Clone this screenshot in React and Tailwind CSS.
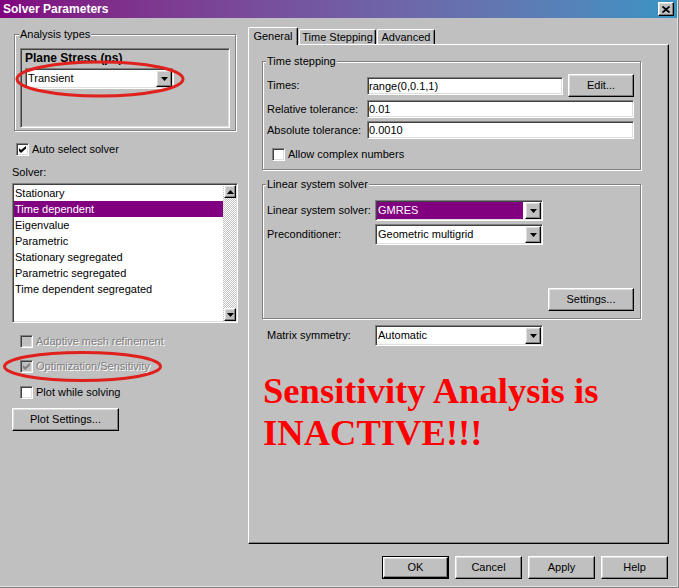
import React from "react";

const raised =
  "border border-t-white border-l-white border-r-black border-b-black shadow-[inset_-1px_-1px_0_#808080,inset_1px_1px_0_#dfdfdf]";
const sunken =
  "border border-t-[#808080] border-l-[#808080] border-r-white border-b-white shadow-[inset_1px_1px_0_#404040,inset_-1px_-1px_0_#dfdfdf] p-[1px]";
const etched =
  "relative border border-[#808080] shadow-[inset_1px_1px_0_#fff,1px_1px_0_#fff]";
const disabledText = "text-[#808080] [text-shadow:1px_1px_0_#fff]";

function Check({ color = "#000" }) {
  return (
    <svg width="7" height="7" viewBox="0 0 7 7">
      <polygon points="0,2 2,4 7,0 7,2.6 2,7 0,5" fill={color} />
    </svg>
  );
}

function Checkbox({ checked, disabled }) {
  return (
    <div
      className={
        "w-[13px] h-[13px] flex items-center justify-center " +
        sunken +
        (disabled ? " bg-[#c0c0c0]" : " bg-white")
      }
    >
      {checked && <Check color={disabled ? "#808080" : "#000"} />}
    </div>
  );
}

function Arrow({ up }) {
  return (
    <svg width="7" height="4" viewBox="0 0 7 4">
      {up ? (
        <polygon points="0,4 7,4 3.5,0" fill="#000" />
      ) : (
        <polygon points="0,0 7,0 3.5,4" fill="#000" />
      )}
    </svg>
  );
}

function Combo({ value, width, highlight }) {
  return (
    <div className={"h-[21px] flex bg-white " + sunken + " " + width}>
      <div className="flex-1 flex items-center pr-[2px]">
        <span
          className={
            "flex-1 h-full pl-[1px] leading-[17px] " +
            (highlight ? "bg-[#800080] text-white" : "")
          }
        >
          {value}
        </span>
      </div>
      <div className={"w-[16px] h-full flex items-center justify-center bg-[#c0c0c0] " + raised}>
        <Arrow />
      </div>
    </div>
  );
}

function Button({ label, width, isDefault }) {
  if (isDefault) {
    return (
      <div className={"h-[23px] border border-black " + width}>
        <div className={"h-full flex items-center justify-center " + raised}>{label}</div>
      </div>
    );
  }
  return (
    <div className={"h-[23px] flex items-center justify-center " + raised + " " + width}>
      {label}
    </div>
  );
}

function Field({ value, width }) {
  return (
    <div className={"h-[18px] bg-white leading-[14px] " + sunken + " " + width}>{value}</div>
  );
}

const solvers = [
  "Stationary",
  "Time dependent",
  "Eigenvalue",
  "Parametric",
  "Stationary segregated",
  "Parametric segregated",
  "Time dependent segregated",
];

export default function App() {
  return (
    <div className="relative w-[679px] h-[588px] bg-[#c0c0c0] border-r border-b border-[#808080] shadow-[inset_-1px_-1px_0_#dfdfdf] font-['Liberation_Sans',Arial,sans-serif] text-[11px] leading-[13px] text-black overflow-hidden">
      {/* title bar */}
      <div className="h-[18px] w-[677px] flex items-center justify-between bg-gradient-to-r from-[#800080] to-[#3794c4] pl-[3px] pr-[3px]">
        <span className="text-white font-bold text-[12px] leading-[14px]">Solver Parameters</span>
        <div className={"w-[16px] h-[14px] flex items-center justify-center bg-[#c0c0c0] " + raised}>
          <svg width="8" height="7" viewBox="0 0 8 7">
            <path d="M0.5 0.5 L7.5 6.5 M7.5 0.5 L0.5 6.5" stroke="#000" strokeWidth="1.8" />
          </svg>
        </div>
      </div>

      <div className="flex">
        {/* left column */}
        <div className="w-[248px] pl-[12px] pt-[16px]">
          <div className={etched + " ml-[2px] w-[222px] h-[97px]"}>
            <span className="absolute -top-[7px] left-[4px] px-[1px] bg-[#c0c0c0]">Analysis types</span>
            <div className={"mt-[13px] ml-[5px] w-[210px] h-[80px] bg-[#c0c0c0] " + sunken}>
              <div className="pl-[3px] pt-[1px]">
                <div className="font-bold text-[12px] leading-[14px]">Plane Stress (ps)</div>
                <div className="mt-[3px]">
                  <Combo value="Transient" width="w-[149px]" />
                </div>
              </div>
            </div>
          </div>

          <div className="mt-[12px] ml-[4px] flex items-center gap-[3px]">
            <Checkbox checked />
            <span>Auto select solver</span>
          </div>

          <div className="mt-[10px]">Solver:</div>

          <div className={"mt-[4px] w-[226px] h-[140px] bg-white flex " + sunken}>
            <div className="flex-1">
              {solvers.map((s) => (
                <div
                  key={s}
                  className={
                    "h-[16px] leading-[16px] pl-[1px] " +
                    (s === "Time dependent" ? "bg-[#800080] text-white" : "")
                  }
                >
                  {s}
                </div>
              ))}
            </div>
            <div className="w-[13px] h-full flex flex-col justify-between bg-[image:repeating-conic-gradient(#c0c0c0_0%_25%,#fff_0%_50%)] bg-[length:2px_2px]">
              <div className={"w-[12px] h-[13px] ml-[1px] flex items-center justify-center bg-[#c0c0c0] " + raised}>
                <Arrow up />
              </div>
              <div className={"w-[12px] h-[13px] ml-[1px] flex items-center justify-center bg-[#c0c0c0] " + raised}>
                <Arrow />
              </div>
            </div>
          </div>

          <div className="mt-[12px] ml-[8px] flex items-center gap-[3px]">
            <Checkbox disabled />
            <span className={disabledText}>Adaptive mesh refinement</span>
          </div>
          <div className="mt-[12px] ml-[8px] flex items-center gap-[3px]">
            <Checkbox checked disabled />
            <span className={disabledText}>Optimization/Sensitivity</span>
          </div>
          <div className="mt-[13px] ml-[8px] flex items-center gap-[3px]">
            <Checkbox />
            <span>Plot while solving</span>
          </div>

          <div className="mt-[9px]">
            <Button label="Plot Settings..." width="w-[107px]" />
          </div>
        </div>

        {/* right column */}
        <div className="w-[421px]">
          <div className="mt-[9px] h-[17px] flex items-end">
            <div className="relative z-10 -mb-px w-[50px] h-[18px] flex items-center justify-center pb-[1px] bg-[#c0c0c0] border-t border-l border-r border-t-white border-l-white border-r-black rounded-t-[2px] shadow-[inset_-1px_0_0_#808080]">
              General
            </div>
            <div className="ml-[1px] w-[77px] h-[15px] flex items-center justify-center bg-[#c0c0c0] border-t border-l border-r border-t-white border-l-white border-r-black rounded-t-[2px] shadow-[inset_-1px_0_0_#808080]">
              Time Stepping
            </div>
            <div className="ml-[1px] w-[58px] h-[15px] flex items-center justify-center bg-[#c0c0c0] border-t border-l border-r border-t-white border-l-white border-r-black rounded-t-[2px] shadow-[inset_-1px_0_0_#808080]">
              Advanced
            </div>
          </div>

          <div className="w-[421px] h-[500px] pl-[13px] pt-[16px] border border-t-white border-l-white border-r-black border-b-black shadow-[inset_-1px_-1px_0_#808080]">
            <div className={etched + " w-[379px] h-[109px] pt-[12px] pl-[4px]"}>
              <span className="absolute -top-[7px] left-[3px] px-[1px] bg-[#c0c0c0]">Time stepping</span>
              <div className="h-[23px] flex items-center">
                <span className="w-[100px]">Times:</span>
                <Field value="range(0,0.1,1)" width="w-[196px]" />
                <div className="ml-[5px]">
                  <Button label="Edit..." width="w-[66px]" />
                </div>
              </div>
              <div className="mt-[3px] flex items-center">
                <span className="w-[100px]">Relative tolerance:</span>
                <Field value="0.01" width="w-[267px]" />
              </div>
              <div className="mt-[3px] flex items-center">
                <span className="w-[100px]">Absolute tolerance:</span>
                <Field value="0.0010" width="w-[267px]" />
              </div>
              <div className="mt-[9px] ml-[5px] flex items-center gap-[3px]">
                <Checkbox />
                <span>Allow complex numbers</span>
              </div>
            </div>

            <div className={etched + " mt-[14px] w-[379px] h-[135px] pt-[15px] pl-[4px]"}>
              <span className="absolute -top-[7px] left-[3px] px-[1px] bg-[#c0c0c0]">Linear system solver</span>
              <div className="flex items-center">
                <span className="w-[108px]">Linear system solver:</span>
                <Combo value="GMRES" width="w-[168px]" highlight />
              </div>
              <div className="mt-[3px] flex items-center">
                <span className="w-[108px]">Preconditioner:</span>
                <Combo value="Geometric multigrid" width="w-[168px]" />
              </div>
              <div className="mt-[43px] flex justify-end pr-[6px]">
                <Button label="Settings..." width="w-[86px]" />
              </div>
            </div>

            <div className="mt-[6px] ml-[5px] flex items-center">
              <span className="w-[108px]">Matrix symmetry:</span>
              <Combo value="Automatic" width="w-[168px]" />
            </div>

            <div className="mt-[24px] ml-[1px] font-['Liberation_Serif','Times_New_Roman',serif] font-bold text-[36.6px] leading-[42px] text-[#ff0000]">
              Sensitivity Analysis is
              <br />
              INACTIVE!!!
            </div>
          </div>
        </div>
      </div>

      {/* dialog buttons */}
      <div className="mt-[12px] pr-[10px] flex justify-end gap-[6px]">
        <Button label="OK" width="w-[67px]" isDefault />
        <Button label="Cancel" width="w-[67px]" />
        <Button label="Apply" width="w-[67px]" />
        <Button label="Help" width="w-[67px]" />
      </div>

      {/* red annotation ellipses */}
      <svg className="absolute inset-0 pointer-events-none" width="679" height="588">
        <ellipse cx="100" cy="79" rx="83" ry="17" fill="none" stroke="#e0201c" strokeWidth="3" />
        <ellipse cx="82.5" cy="366.5" rx="78" ry="14" fill="none" stroke="#e0201c" strokeWidth="3" />
      </svg>
    </div>
  );
}
